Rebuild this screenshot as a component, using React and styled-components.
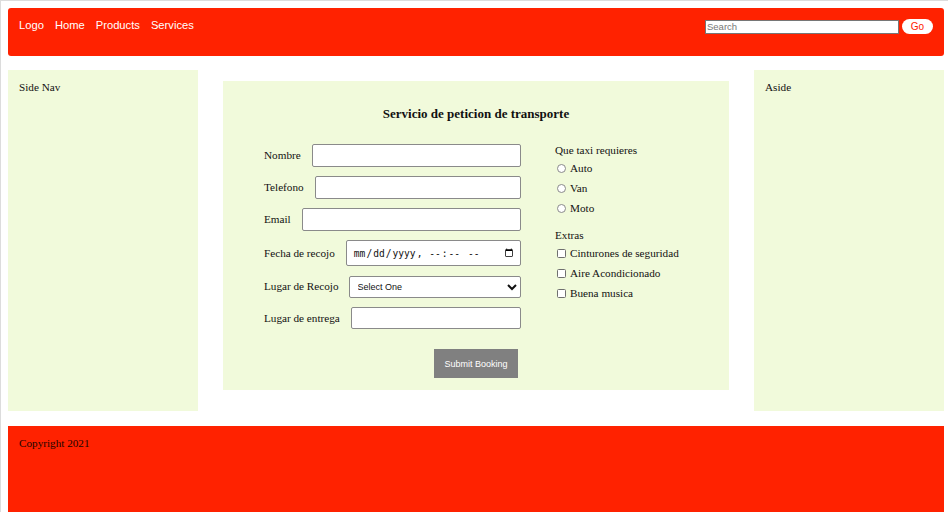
import React from "react";
import styled, { createGlobalStyle } from "styled-components";

const RED = "#ff2200";
const GREEN = "#f1fadb";

const Global = createGlobalStyle`
  html { box-shadow: inset 1px 1px 0 #dcdcdc; }
  body {
    margin: 8px 4px 0 8px;
    font-family: "Liberation Serif", "Times New Roman", serif;
    font-size: 11.2px;
    color: #111;
    background: #fff;
  }
  * { box-sizing: border-box; }
`;

const Page = styled.div`
  width: 936px;
  display: flex;
  flex-direction: column;
`;

const Header = styled.header`
  height: 48px;
  margin-bottom: 14px;
  background: ${RED};
  border-radius: 3px;
  padding: 11px 11px 0 11px;
  display: flex;
  justify-content: space-between;
  align-items: flex-start;
  font-family: "Liberation Sans", Arial, sans-serif;
`;

const NavLinks = styled.nav`
  display: flex;
  gap: 11px;
  line-height: 13px;
`;

const NavLink = styled.a`
  color: #fff;
  text-decoration: none;
  font-size: 11.2px;
`;

const SearchForm = styled.div`
  display: flex;
  align-items: flex-start;
  gap: 3px;
`;

const SearchInput = styled.input`
  width: 194px;
  height: 14px;
  margin-top: 0.5px;
  border: 1px solid #767676;
  padding: 0 1px;
  font-family: "Liberation Sans", Arial, sans-serif;
  font-size: 9.5px;
  outline: none;
  &::placeholder { color: #777; }
`;

const GoButton = styled.button`
  width: 31px;
  height: 15px;
  border: none;
  border-radius: 8px;
  background: #fff;
  color: ${RED};
  font-family: "Liberation Sans", Arial, sans-serif;
  font-size: 10px;
  padding: 0;
  line-height: 15px;
`;

const Middle = styled.div`
  display: grid;
  grid-template-columns: 190px 506px 190px;
  column-gap: 25px;
  height: 341px;
  margin-bottom: 15px;
`;

const SidePanel = styled.div`
  background: ${GREEN};
  padding: 11px;
  line-height: 13px;
`;

const Main = styled.main`
  background: ${GREEN};
  margin-top: 11px;
  height: 309px;
  padding: 25px 41px 12px;
  display: flex;
  flex-direction: column;
`;

const Title = styled.h3`
  margin: 0 0 23px;
  text-align: center;
  font-size: 13px;
  line-height: 15px;
  font-weight: bold;
`;

const Columns = styled.div`
  display: grid;
  grid-template-columns: 257px 1fr;
  column-gap: 34px;
`;

const LeftCol = styled.div`
  display: flex;
  flex-direction: column;
  gap: 9px;
`;

const FieldRow = styled.div`
  display: flex;
  align-items: center;
  gap: ${(p) => p.$gap || 11}px;
  height: ${(p) => p.$h || 23}px;
`;

const Label = styled.label`
  white-space: nowrap;
  line-height: 13px;
`;

const TextInput = styled.input`
  flex: 1;
  min-width: 0;
  height: 100%;
  border: 1px solid #8a8a8a;
  border-radius: 2px;
  background: #fff;
  padding: 0 4px;
`;

const DateInput = styled.input`
  flex: 1;
  min-width: 0;
  height: 100%;
  border: 1px solid #8a8a8a;
  border-radius: 2px;
  background: #fff;
  padding: 0 4px 0 6px;
  font-family: "DejaVu Sans Mono", "Liberation Mono", monospace;
  font-size: 9.6px;
  color: #111;
`;

const Select = styled.select`
  flex: 1;
  min-width: 0;
  height: 22px;
  border: 1px solid #8a8a8a;
  border-radius: 2px;
  background: #fff;
  padding: 0 4px 0 4px;
  font-family: "Liberation Sans", Arial, sans-serif;
  font-size: 9px;
  color: #111;
`;

const RightCol = styled.div`
  display: flex;
  flex-direction: column;
`;

const GroupTitle = styled.div`
  line-height: 13px;
  margin-top: ${(p) => p.$mt || 0}px;
  margin-bottom: 1px;
`;

const OptionRow = styled.label`
  display: flex;
  align-items: center;
  gap: 4px;
  height: 20px;
  line-height: 13px;
  padding-left: 2px;
`;

const Radio = styled.input`
  appearance: none;
  margin: 0;
  width: 9px;
  height: 9px;
  border: 1px solid #8a8a8a;
  border-radius: 50%;
  background: #fff;
`;

const Checkbox = styled.input`
  appearance: none;
  margin: 0;
  width: 9px;
  height: 9px;
  border: 1px solid #6f6f6f;
  border-radius: 1.5px;
  background: #fff;
`;

const SubmitWrap = styled.div`
  display: flex;
  justify-content: center;
  margin-top: 20px;
`;

const SubmitButton = styled.button`
  width: 84px;
  height: 29px;
  border: none;
  background: #808080;
  color: #fff;
  font-family: "Liberation Sans", Arial, sans-serif;
  font-size: 9px;
  padding: 0;
`;

const Footer = styled.footer`
  height: 86px;
  background: ${RED};
  padding: 11px;
  line-height: 13px;
  color: #1a0500;
`;

export default function App() {
  return (
    <>
      <Global />
      <Page>
        <Header>
          <NavLinks>
            <NavLink href="#">Logo</NavLink>
            <NavLink href="#">Home</NavLink>
            <NavLink href="#">Products</NavLink>
            <NavLink href="#">Services</NavLink>
          </NavLinks>
          <SearchForm>
            <SearchInput type="text" placeholder="Search" />
            <GoButton>Go</GoButton>
          </SearchForm>
        </Header>
        <Middle>
          <SidePanel>Side Nav</SidePanel>
          <Main>
            <Title>Servicio de peticion de transporte</Title>
            <Columns>
              <LeftCol>
                <FieldRow>
                  <Label>Nombre</Label>
                  <TextInput type="text" />
                </FieldRow>
                <FieldRow>
                  <Label>Telefono</Label>
                  <TextInput type="text" />
                </FieldRow>
                <FieldRow>
                  <Label>Email</Label>
                  <TextInput type="email" />
                </FieldRow>
                <FieldRow $h={26}>
                  <Label>Fecha de recojo</Label>
                  <DateInput type="datetime-local" />
                </FieldRow>
                <FieldRow $gap={10}>
                  <Label>Lugar de Recojo</Label>
                  <Select defaultValue="">
                    <option value="">Select One</option>
                  </Select>
                </FieldRow>
                <FieldRow $h={22}>
                  <Label>Lugar de entrega</Label>
                  <TextInput type="text" />
                </FieldRow>
              </LeftCol>
              <RightCol>
                <GroupTitle>Que taxi requieres</GroupTitle>
                <OptionRow>
                  <Radio type="radio" name="taxi" />
                  Auto
                </OptionRow>
                <OptionRow>
                  <Radio type="radio" name="taxi" />
                  Van
                </OptionRow>
                <OptionRow>
                  <Radio type="radio" name="taxi" />
                  Moto
                </OptionRow>
                <GroupTitle $mt={11}>Extras</GroupTitle>
                <OptionRow>
                  <Checkbox type="checkbox" />
                  Cinturones de seguridad
                </OptionRow>
                <OptionRow>
                  <Checkbox type="checkbox" />
                  Aire Acondicionado
                </OptionRow>
                <OptionRow>
                  <Checkbox type="checkbox" />
                  Buena musica
                </OptionRow>
              </RightCol>
            </Columns>
            <SubmitWrap>
              <SubmitButton>Submit Booking</SubmitButton>
            </SubmitWrap>
          </Main>
          <SidePanel>Aside</SidePanel>
        </Middle>
        <Footer>Copyright 2021</Footer>
      </Page>
    </>
  );
}
